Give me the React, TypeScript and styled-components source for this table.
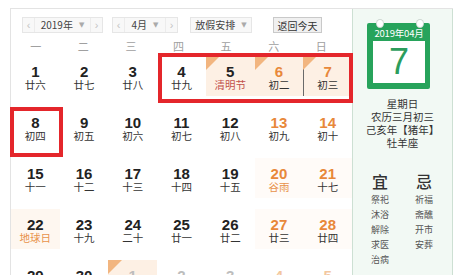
import React from 'react';
import styled, { createGlobalStyle } from 'styled-components';

const Global = createGlobalStyle`
  html, body { margin: 0; padding: 0; background: #fff; }
  body {
    font-family: "Liberation Sans", "Noto Sans CJK SC", sans-serif;
    overflow: hidden;
    width: 465px;
    height: 275px;
  }
`;

const Page = styled.div`
  position: relative;
  width: 465px;
  height: 275px;
  overflow: hidden;
`;

const Widget = styled.div`
  display: flex;
  margin: 8px 0 0 10px;
  width: 443px;
  height: 267px;
  border-top: 1px solid #e3e3e3;
  border-left: 1px solid #e3e3e3;
  box-sizing: border-box;
`;

const Main = styled.div`
  width: 341px;
  flex: 0 0 341px;
  display: flex;
  flex-direction: column;
`;

const Toolbar = styled.div`
  display: flex;
  align-items: center;
  padding: 8px 0 0 11px;
  height: 16px;
`;

const Select = styled.div<{ $w: number; $gap: number }>`
  display: flex;
  width: ${(p) => p.$w}px;
  height: 16px;
  margin-left: ${(p) => p.$gap}px;
  box-sizing: border-box;
  border: 1px solid #e6e6e6;
  background: #f8f8f8;
  font-family: "Noto Sans CJK SC", sans-serif;
  font-size: 10px;
  color: #444;
`;

const Arrow = styled.div<{ $side: 'l' | 'r' }>`
  width: 11px;
  flex: 0 0 11px;
  display: flex;
  align-items: center;
  justify-content: center;
  color: #c4c4c4;
  font-family: "Liberation Sans", sans-serif;
  font-size: 11px;
  ${(p) => (p.$side === 'l' ? 'border-right: 1px solid #ececec;' : 'border-left: 1px solid #ececec;')}
`;

const Label = styled.div`
  flex: 1;
  display: flex;
  align-items: center;
  justify-content: center;
  gap: 6px;
  line-height: 14px;
`;

const Caret = styled.span`
  color: #aaa;
  font-size: 7px;
  font-family: "DejaVu Sans", sans-serif;
`;

const TodayBtn = styled.div`
  margin-left: 21px;
  width: 49px;
  height: 16px;
  box-sizing: border-box;
  border: 1px solid #c9c9c9;
  background: #f0f0f0;
  display: flex;
  align-items: center;
  justify-content: center;
  font-family: "Noto Sans CJK SC", sans-serif;
  font-size: 10px;
  color: #333;
`;

const WeekHeader = styled.div`
  display: grid;
  grid-template-columns: repeat(7, 1fr);
  width: 333px;
  padding-left: 1px;
  margin-top: 6px;
  height: 16px;
  line-height: 15px;
  font-family: "Noto Sans CJK SC", sans-serif;
  font-size: 11px;
  color: #a0a0a0;
  text-align: center;
`;

const Grid = styled.div`
  display: grid;
  grid-template-columns: repeat(7, 1fr);
  grid-auto-rows: 51px;
`;

const Cell = styled.div<{ $bg: string; $today?: boolean; $holiday?: boolean }>`
  position: relative;
  margin-top: 2px;
  height: 40px;
  box-sizing: border-box;
  padding-top: 8px;
  background: ${(p) => p.$bg};
  text-align: center;
  ${(p) => (p.$today ? 'box-shadow: inset 1px 0 0 #6a6a6a;' : '')}
  ${(p) =>
    p.$holiday
      ? `&::before {
          content: '';
          position: absolute;
          left: 0;
          top: 0;
          width: 0;
          height: 0;
          border-top: 14px solid #f2b57f;
          border-right: 14px solid transparent;
        }`
      : ''}
`;

const Num = styled.div<{ $color: string }>`
  font-family: "Liberation Sans", sans-serif;
  font-weight: bold;
  font-size: 15px;
  line-height: 15px;
  color: ${(p) => p.$color};
`;

const Lunar = styled.div<{ $color: string }>`
  font-family: "Noto Sans CJK SC", sans-serif;
  font-size: 10.5px;
  line-height: 12px;
  color: ${(p) => p.$color};
`;

const Side = styled.div`
  width: 101px;
  flex: 0 0 101px;
  box-sizing: border-box;
  border-left: 1px solid #cde0d3;
  border-right: 1px solid #cde0d3;
  background: #f2f9f4;
  display: flex;
  flex-direction: column;
  font-family: "Noto Sans CJK SC", sans-serif;
`;

const CalIcon = styled.div`
  position: relative;
  margin: 14px 0 0 14px;
  width: 63px;
  height: 66px;
  box-sizing: border-box;
  background: #27a35b;
  border-radius: 2px;
  padding: 0 5px 6px 6px;
  display: flex;
  flex-direction: column;
`;

const Ring = styled.span<{ $left: number }>`
  position: absolute;
  top: -3px;
  left: ${(p) => p.$left}px;
  width: 6px;
  height: 7px;
  border-radius: 50%;
  background: #fff;
  box-shadow: 0 0 0 1px #cfd8d2;
`;

const CalHead = styled.div`
  height: 18px;
  line-height: 20px;
  color: #fff;
  font-size: 9.5px;
  text-align: center;
  white-space: nowrap;
  letter-spacing: -0.2px;
`;

const CalBody = styled.div`
  flex: 1;
  background: #fff;
  display: flex;
  align-items: center;
  justify-content: center;
  font-family: "Liberation Sans", sans-serif;
  font-size: 36px;
  color: #2c9d5c;
`;

const InfoLines = styled.div`
  margin-top: 8px;
  display: flex;
  flex-direction: column;
  align-items: center;
  font-size: 10.5px;
  line-height: 13px;
  color: #333;
`;

const Advice = styled.div`
  margin-top: 23px;
  display: grid;
  grid-template-columns: 1fr 1fr;
  padding: 0 6px 0 5px;
`;

const AdviceCol = styled.div`
  display: flex;
  flex-direction: column;
  align-items: center;
`;

const AdviceTitle = styled.div`
  font-size: 16px;
  line-height: 18px;
  font-weight: 500;
  color: #333;
  margin-bottom: 2px;
`;

const AdviceItem = styled.div`
  font-size: 9px;
  line-height: 15px;
  color: #555;
`;

const Mark = styled.div<{ $x: number; $y: number; $w: number; $h: number }>`
  position: absolute;
  left: ${(p) => p.$x}px;
  top: ${(p) => p.$y}px;
  width: ${(p) => p.$w}px;
  height: ${(p) => p.$h}px;
  box-sizing: border-box;
  border: 4px solid #e4262b;
  pointer-events: none;
`;

type Day = {
  d: number;
  l: string;
  wk?: boolean;
  hol?: boolean;
  fest?: 'red' | 'orange';
  other?: boolean;
  today?: boolean;
  bg?: string;
};

const soft = '#fffbf8';

const rows: Day[][] = [
  [
    { d: 1, l: '廿六' },
    { d: 2, l: '廿七' },
    { d: 3, l: '廿八' },
    { d: 4, l: '廿九' },
    { d: 5, l: '清明节', hol: true, fest: 'red' },
    { d: 6, l: '初二', wk: true, hol: true },
    { d: 7, l: '初三', wk: true, hol: true, today: true },
  ],
  [
    { d: 8, l: '初四' },
    { d: 9, l: '初五' },
    { d: 10, l: '初六' },
    { d: 11, l: '初七' },
    { d: 12, l: '初八' },
    { d: 13, l: '初九', wk: true },
    { d: 14, l: '初十', wk: true },
  ],
  [
    { d: 15, l: '十一' },
    { d: 16, l: '十二' },
    { d: 17, l: '十三' },
    { d: 18, l: '十四' },
    { d: 19, l: '十五' },
    { d: 20, l: '谷雨', wk: true, fest: 'orange', bg: soft },
    { d: 21, l: '十七', wk: true, bg: soft },
  ],
  [
    { d: 22, l: '地球日', fest: 'orange', bg: '#fef7f0' },
    { d: 23, l: '十九' },
    { d: 24, l: '二十' },
    { d: 25, l: '廿一' },
    { d: 26, l: '廿二' },
    { d: 27, l: '廿三', wk: true, bg: soft },
    { d: 28, l: '廿四', wk: true, bg: soft },
  ],
  [
    { d: 29, l: '廿五' },
    { d: 30, l: '廿六' },
    { d: 1, l: '劳动节', other: true, hol: true },
    { d: 2, l: '廿八', other: true },
    { d: 3, l: '廿九', other: true },
    { d: 4, l: '青年节', other: true, wk: true },
    { d: 5, l: '初一', other: true, wk: true },
  ],
];

const numColor = (x: Day) => {
  if (x.other) return x.wk ? '#f3c79f' : '#bdbdbd';
  return x.wk ? '#e8883a' : '#222';
};

const lunarColor = (x: Day) => {
  if (x.other) return '#bbb';
  if (x.fest === 'red') return '#c2504c';
  if (x.fest === 'orange') return '#e8924a';
  return '#333';
};

const cellBg = (x: Day) => {
  if (x.hol) return '#fdf0e4';
  return x.bg ?? '#fff';
};

const weekNames = ['一', '二', '三', '四', '五', '六', '日'];

export default function App() {
  return (
    <Page>
      <Global />
      <Widget>
        <Main>
          <Toolbar>
            <Select $w={81} $gap={0}>
              <Arrow $side="l">‹</Arrow>
              <Label>
                <span>2019年</span>
                <Caret>▼</Caret>
              </Label>
              <Arrow $side="r">›</Arrow>
            </Select>
            <Select $w={66} $gap={9}>
              <Arrow $side="l">‹</Arrow>
              <Label>
                <span>4月</span>
                <Caret>▼</Caret>
              </Label>
              <Arrow $side="r">›</Arrow>
            </Select>
            <Select $w={62} $gap={12}>
              <Label>
                <span>放假安排</span>
                <Caret>▼</Caret>
              </Label>
            </Select>
            <TodayBtn>返回今天</TodayBtn>
          </Toolbar>
          <WeekHeader>
            {weekNames.map((w) => (
              <div key={w}>{w}</div>
            ))}
          </WeekHeader>
          <Grid>
            {rows.flat().map((x, i) => (
              <Cell key={i} $bg={cellBg(x)} $today={x.today} $holiday={x.hol}>
                <Num $color={numColor(x)}>{x.d}</Num>
                <Lunar $color={lunarColor(x)}>{x.l}</Lunar>
              </Cell>
            ))}
          </Grid>
        </Main>
        <Side>
          <CalIcon>
            <Ring $left={10} />
            <Ring $left={50} />
            <CalHead>2019年04月</CalHead>
            <CalBody>7</CalBody>
          </CalIcon>
          <InfoLines>
            <div>星期日</div>
            <div>农历三月初三</div>
            <div>己亥年【猪年】</div>
            <div>牡羊座</div>
          </InfoLines>
          <Advice>
            <AdviceCol>
              <AdviceTitle>宜</AdviceTitle>
              <AdviceItem>祭祀</AdviceItem>
              <AdviceItem>沐浴</AdviceItem>
              <AdviceItem>解除</AdviceItem>
              <AdviceItem>求医</AdviceItem>
              <AdviceItem>治病</AdviceItem>
            </AdviceCol>
            <AdviceCol>
              <AdviceTitle>忌</AdviceTitle>
              <AdviceItem>祈福</AdviceItem>
              <AdviceItem>斋醮</AdviceItem>
              <AdviceItem>开市</AdviceItem>
              <AdviceItem>安葬</AdviceItem>
            </AdviceCol>
          </Advice>
        </Side>
      </Widget>
      <Mark $x={158} $y={53} $w={195} $h={50} />
      <Mark $x={10} $y={107} $w={53} $h={50} />
    </Page>
  );
}
